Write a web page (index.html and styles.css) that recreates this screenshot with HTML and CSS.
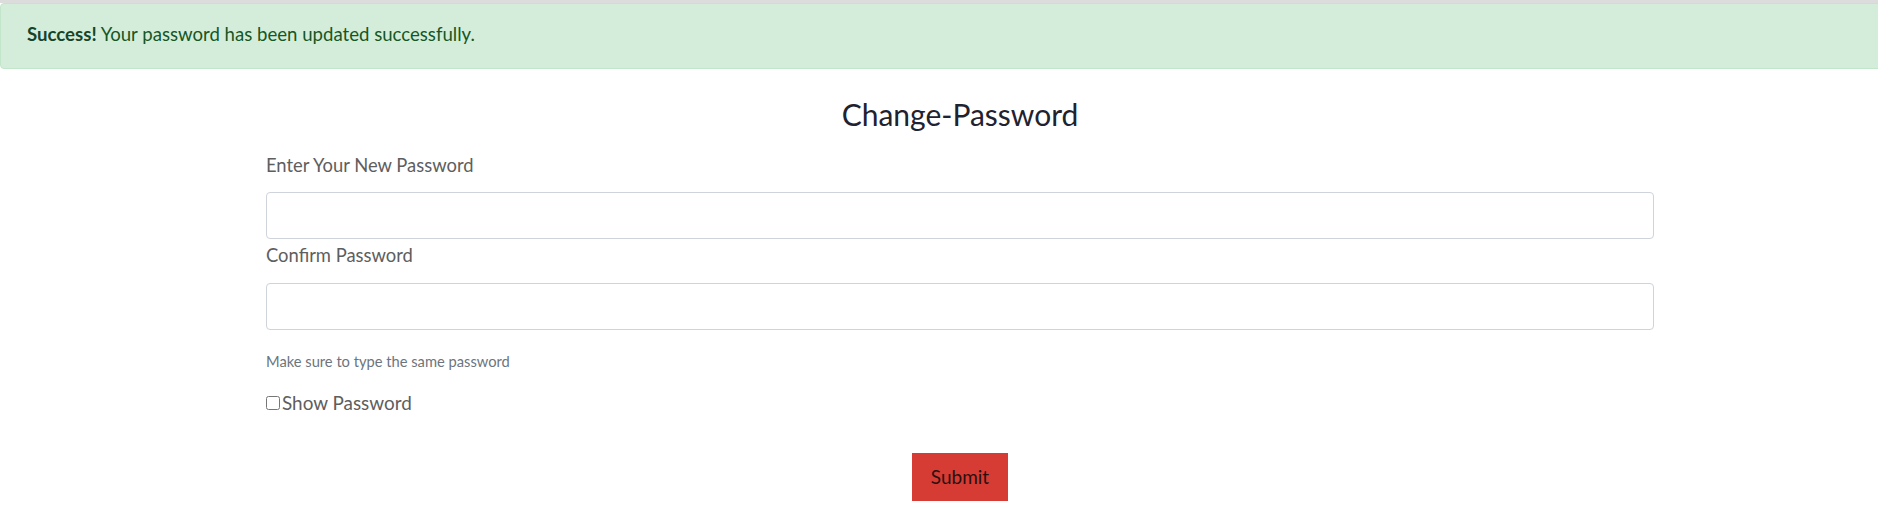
FILE: index.html
```html
<!DOCTYPE html>
<html lang="en">
<head>
<meta charset="utf-8">
<title>Change Password</title>
<link rel="stylesheet" href="styles.css">
</head>
<body>
<div class="page">
  <div class="topbar"></div>
  <div class="alert"><strong>Success!</strong> Your password has been updated successfully.</div>
  <div class="container">
    <h2 class="title">Change-Password</h2>
    <form class="form">
      <label class="label label-first" for="pw1">Enter Your New Password</label>
      <input class="input" id="pw1" type="password">
      <label class="label label-second" for="pw2">Confirm Password</label>
      <input class="input" id="pw2" type="password">
      <p class="help">Make sure to type the same password</p>
      <label class="show"><input class="check" type="checkbox">Show Password</label>
      <div class="actions"><button class="submit" type="button">Submit</button></div>
    </form>
  </div>
</div>
</body>
</html>
```
FILE: styles.css
```css
html, body {
  margin: 0;
  padding: 0;
  overflow: hidden;
  background: #ffffff;
}
body {
  font-family: Lato, "Open Sans", sans-serif;
  font-size: 18px;
}
.page {
  width: 1920px;
}
.topbar {
  height: 3px;
  background: #dcdcdc;
}
.alert {
  background: #d4edda;
  border: 1px solid #c3e6cb;
  border-radius: 4px;
  color: #155724;
  font-size: 18.6px;
  line-height: 27px;
  padding: 17px 26px 20px;
}
.alert strong {
  font-weight: 700;
  color: #14452a;
}
.container {
  width: 1388px;
  margin: 0 auto;
}
.title {
  margin: 28px 0 0;
  text-align: center;
  font-weight: 400;
  font-size: 30px;
  line-height: 34px;
  color: #1f2230;
}
.form {
  display: flex;
  flex-direction: column;
  margin: 0;
}
.label {
  display: block;
  color: #5e5e5e;
  font-size: 18.4px;
  line-height: 22px;
  margin-bottom: 17px;
}
.label-first {
  margin-top: 23px;
  margin-bottom: 16px;
}
.label-second {
  margin-top: 5px;
}
.input {
  box-sizing: border-box;
  height: 47px;
  width: 100%;
  margin: 0;
  border: 1px solid #ced4da;
  border-radius: 4px;
  background: #fff;
}
.help {
  margin: 21px 0 0;
  font-size: 14.7px;
  line-height: 20px;
  color: #6c757d;
}
.show {
  display: flex;
  align-items: center;
  margin-top: 21px;
  color: #5e5e5e;
  font-size: 18.9px;
  line-height: 22px;
}
.check {
  width: 14px;
  height: 14px;
  margin: 0 2px 0 0;
}
.actions {
  display: flex;
  justify-content: center;
  margin-top: 39px;
}
.submit {
  background: #d63c34;
  color: #2b1010;
  border: none;
  border-radius: 0;
  font-family: Lato, "Open Sans", sans-serif;
  font-size: 19px;
  line-height: 28px;
  padding: 10px 19px;
}
```
